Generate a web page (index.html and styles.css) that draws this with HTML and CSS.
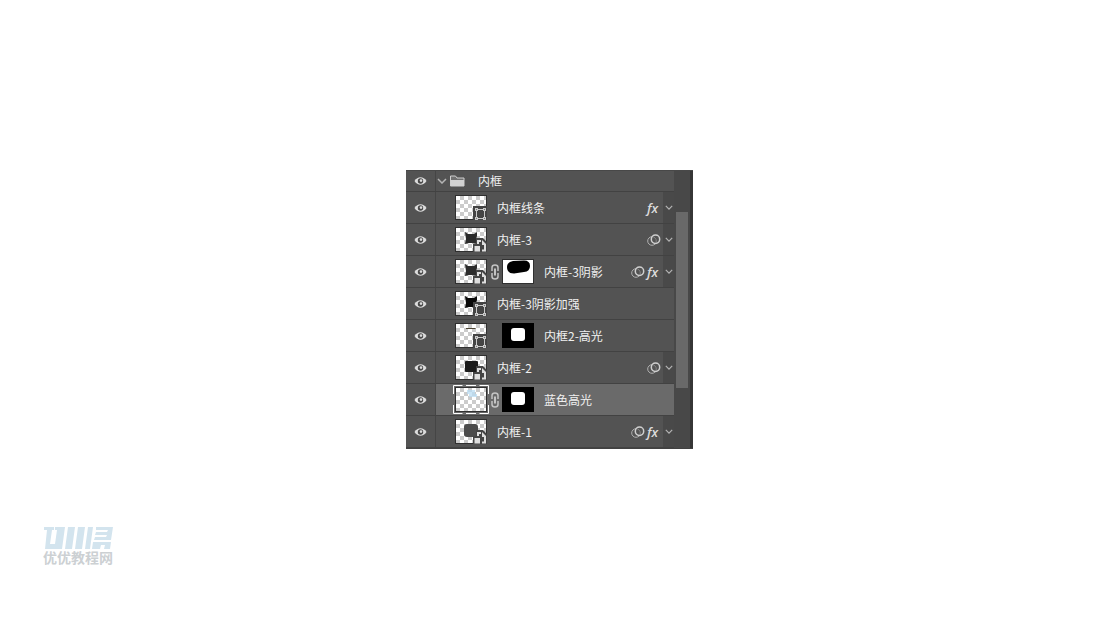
FILE: index.html
```html
<!DOCTYPE html>
<html lang="zh-CN">
<head>
<meta charset="utf-8">
<title>内框</title>
<link rel="stylesheet" href="styles.css">
</head>
<body>
<svg class="defs" aria-hidden="true">
  <defs>
    <pattern id="checks" x="1" y="1" width="8" height="8" patternUnits="userSpaceOnUse">
      <rect width="8" height="8" fill="#fff"/>
      <path d="M4 0h4v4H4zM0 4h4v4H0z" fill="#cbcbcb"/>
    </pattern>
    <symbol id="eye" viewBox="0 0 14 10">
      <path d="M.5 5C3.500 0 9.500 0 12.500 5 9.500 10 3.500 10 .5 5z" fill="#dcdcdc"/>
      <circle cx="6.500" cy="5" r="2.700" fill="#484848"/>
      <circle cx="7" cy="4.600" r="1.300" fill="#dcdcdc"/>
    </symbol>
    <symbol id="chevron" viewBox="0 0 10 6">
      <path d="M1 1l4 4 4-4" fill="none" stroke="#b4b4b4" stroke-width="1.500"/>
    </symbol>
    <symbol id="rings" viewBox="0 0 14 12">
      <circle cx="5" cy="7" r="4.300" fill="none" stroke="#b0b0b0"/>
      <circle cx="8.500" cy="5.200" r="4.200" fill="#535353" fill-opacity=".5" stroke="#d0d0d0" stroke-width="1.500"/>
    </symbol>
    <symbol id="link" viewBox="0 0 8 16">
      <path d="M1 7V3.500Q1 1 4 1t3 2.500V7M1 9v3.500Q1 15 4 15t3-2.500V9" fill="none" stroke="#c4c4c4" stroke-width="1.500"/>
      <path d="M4 4.500v7" stroke="#d0d0d0" stroke-width="1.800"/>
    </symbol>
    <symbol id="base" viewBox="0 0 32 25">
      <rect width="32" height="25" fill="#303030"/>
      <rect x="1" y="1" width="30" height="23" fill="url(#checks)"/>
    </symbol>
    <symbol id="shape" viewBox="0 0 32 25">
      <path d="M18 11h14v14H18z" fill="#444"/>
      <path d="M21.500 14.500h8v9h-8z" fill="none" stroke="#c9c9c9"/>
      <path d="M20 13h3v3h-3zM28 13h3v3h-3zM20 22h3v3h-3zM28 22h3v3h-3z" fill="#c9c9c9"/>
      <path d="M21 14h1v1h-1zM29 14h1v1h-1zM21 23h1v1h-1zM29 23h1v1h-1z" fill="#777"/>
    </symbol>
    <symbol id="smart" viewBox="0 0 32 25">
      <path d="M21 11h7l4 4v10H18v-8h3z" fill="#444"/>
      <path d="M22 17v-4h4v2h-2v2zM27 13l4 4v7.500h-4v-2h2V18h-2z" fill="#dedede"/>
      <path d="M19.500 19h5.500v5.500h-5.500z" fill="#dedede"/>
    </symbol>
    <symbol id="star" viewBox="0 0 32 25">
      <path d="M10 5l3 2h6l3-2v4l-1 3 1 5-5-1h-3l-4 1 1-5z"/>
    </symbol>
    <symbol id="mask" viewBox="0 0 32 25">
      <rect width="32" height="25" fill="#000"/>
      <rect x="9" y="5" width="14" height="13" rx="3" fill="#fff"/>
    </symbol>
  </defs>
</svg>

<main class="stage">
  <section class="panel" aria-label="图层">
    <ul class="layers">
      <li class="layer group">
        <button class="eye" aria-label="显示"><svg><use href="#eye"/></svg></button>
        <div class="body">
          <button class="toggle" aria-label="展开"><svg><use href="#chevron"/></svg></button>
          <svg class="folder" viewBox="0 0 15 12"><path d="M.5 11V1h5l1.500 2h7v8z" fill="#707070" stroke="#cfcfcf"/><path d="M1 5h13v6H1z" fill="#d2d2d2"/></svg>
          <span class="name">内框</span>
        </div>
      </li>
      <li class="layer">
        <button class="eye" aria-label="显示"><svg><use href="#eye"/></svg></button>
        <div class="body">
          <svg class="thumb"><use href="#base"/><use href="#shape"/></svg>
          <span class="name">内框线条</span>
          <span class="fx">fx</span>
          <button class="more" aria-label="效果"><svg><use href="#chevron"/></svg></button>
        </div>
      </li>
      <li class="layer">
        <button class="eye" aria-label="显示"><svg><use href="#eye"/></svg></button>
        <div class="body">
          <svg class="thumb"><use href="#base"/><use href="#star" fill="#2b2b2b"/><use href="#smart"/></svg>
          <span class="name">内框-3</span>
          <svg class="rings"><use href="#rings"/></svg>
          <button class="more" aria-label="效果"><svg><use href="#chevron"/></svg></button>
        </div>
      </li>
      <li class="layer">
        <button class="eye" aria-label="显示"><svg><use href="#eye"/></svg></button>
        <div class="body">
          <svg class="thumb"><use href="#base"/><use href="#star" fill="#2b2b2b"/><use href="#smart"/></svg>
          <span class="join"><svg class="link"><use href="#link"/></svg></span>
          <svg class="thumb" viewBox="0 0 32 25"><rect width="32" height="25" fill="#303030"/><path d="M1 1h30v23H1z" fill="#fff"/><path d="M5 8q0-5 6-6l11-.5q6 0 6 5.500t-6 6l-10 1.500q-7 0-7-6.500z" fill="#000"/></svg>
          <span class="name">内框-3阴影</span>
          <svg class="rings"><use href="#rings"/></svg>
          <span class="fx">fx</span>
          <button class="more" aria-label="效果"><svg><use href="#chevron"/></svg></button>
        </div>
      </li>
      <li class="layer">
        <button class="eye" aria-label="显示"><svg><use href="#eye"/></svg></button>
        <div class="body">
          <svg class="thumb"><use href="#base"/><use href="#star" fill="#080808"/><use href="#shape"/></svg>
          <span class="name">内框-3阴影加强</span>
        </div>
      </li>
      <li class="layer">
        <button class="eye" aria-label="显示"><svg><use href="#eye"/></svg></button>
        <div class="body">
          <svg class="thumb"><use href="#base"/><path d="M11 5h9l1 1H11z" fill="#4d4533"/><use href="#shape"/></svg>
          <span class="join"></span>
          <svg class="thumb"><use href="#mask"/></svg>
          <span class="name">内框2-高光</span>
        </div>
      </li>
      <li class="layer">
        <button class="eye" aria-label="显示"><svg><use href="#eye"/></svg></button>
        <div class="body">
          <svg class="thumb"><use href="#base"/><rect x="10" y="6" width="13" height="11" rx="1" fill="#1c1c1c"/><use href="#smart"/></svg>
          <span class="name">内框-2</span>
          <svg class="rings"><use href="#rings"/></svg>
          <button class="more" aria-label="效果"><svg><use href="#chevron"/></svg></button>
        </div>
      </li>
      <li class="layer selected">
        <button class="eye" aria-label="显示"><svg><use href="#eye"/></svg></button>
        <div class="body">
          <svg class="thumb"><use href="#base"/><path d="M12 3h8v4h2v3h-8V7h-2z" fill="#b9dcf3" opacity=".75"/><path d="M-1.500 7v-8.500h9M24.500-1.500h9V7M33.500 18v8.500h-9M7.500 26.500h-9V18M11-1.500h10M11 26.500h10" fill="none" stroke="#fff"/></svg>
          <span class="join"><svg class="link"><use href="#link"/></svg></span>
          <svg class="thumb"><use href="#mask"/></svg>
          <span class="name">蓝色高光</span>
        </div>
      </li>
      <li class="layer">
        <button class="eye" aria-label="显示"><svg><use href="#eye"/></svg></button>
        <div class="body">
          <svg class="thumb"><use href="#base"/><rect x="9" y="5" width="14" height="13" rx="3" fill="#4b4b4b"/><use href="#smart"/></svg>
          <span class="name">内框-1</span>
          <svg class="rings"><use href="#rings"/></svg>
          <span class="fx">fx</span>
          <button class="more" aria-label="效果"><svg><use href="#chevron"/></svg></button>
        </div>
      </li>
    </ul>
    <div class="scrollbar"><div class="handle"></div></div>
  </section>
</main>

<footer class="brand">
  <svg class="logo" viewBox="0 0 70 24" aria-hidden="true">
    <g fill="#d3e4ee">
      <path d="M1 1h10v3H9L7 18h5l2-14h-2V1h10l-3 22H2L4 4H1z"/>
      <path d="M25 1h7l-3 22h-7zM35 1h7l-3 22h-7zM45 1h5l-3 22h-5z"/>
      <path d="M53 1h17l-2 13H51l1-3h11l1-2H52l1-3h11l1-2H53z"/>
      <path d="M50 16h18l-1 7h-6l1-4h-4l-1 4h-8z"/>
    </g>
  </svg>
  <span class="brand-name">优优教程网</span>
</footer>
</body>
</html>
```
FILE: styles.css
```css
* {
  box-sizing: border-box;
}

body {
  margin: 0;
  background: #fff;
  font-family: "Noto Sans CJK SC", sans-serif;
  font-size: 12px;
}

svg {
  display: block;
  flex: none;
}

button {
  display: flex;
  align-items: center;
  justify-content: center;
  flex: none;
  margin: 0;
  padding: 0;
  border: 0;
  background: none;
}

.defs {
  position: absolute;
  width: 0;
  height: 0;
}

.stage {
  display: flex;
  align-items: center;
  justify-content: center;
  min-height: 100vh;
  padding-right: 1px;
}

.panel {
  display: flex;
  width: 287px;
  border-top: 1px solid #484848;
  border-bottom: 1px solid #414141;
  background: #484848;
}

.layers {
  flex: 1;
  margin: 0;
  padding: 0;
  list-style: none;
}

.layer {
  display: flex;
  height: 32px;
  border-bottom: 1px solid #424242;
  background: #535353;
}

.group {
  height: 21px;
}

.eye {
  width: 30px;
  border-right: 1px solid #454545;
}

.eye svg {
  width: 14px;
  height: 10px;
}

.body {
  display: flex;
  flex: 1;
  align-items: center;
  padding-left: 19px;
}

.group .body {
  padding-left: 1px;
}

.more svg {
  width: 8px;
  height: 5px;
}

.toggle svg {
  width: 10px;
  height: 6px;
}

.folder {
  width: 15px;
  height: 12px;
  margin-left: 3px;
}

.thumb {
  width: 32px;
  height: 25px;
  overflow: visible;
}

.join {
  display: flex;
  justify-content: center;
  width: 15px;
}

.link {
  width: 8px;
  height: 16px;
}

.name {
  flex: 1;
  padding-left: 10px;
  color: #f0f0f0;
  line-height: 18px;
  white-space: nowrap;
}

.group .name {
  padding-left: 13px;
}

.selected .body {
  background: #6a6a6a;
}

.rings {
  width: 14px;
  height: 12px;
  margin-right: 2px;
}

.fx {
  width: 13px;
  margin-right: 3px;
  color: #dcdcdc;
  font: italic 600 13px/18px "Open Sans", sans-serif;
}

.more {
  align-self: stretch;
  width: 11px;
  background: #494949;
}

.scrollbar {
  width: 19px;
  padding: 41px 2px 0;
  border-right: 3px solid #363636;
}

.handle {
  width: 12px;
  height: 176px;
  background: #696969;
}

.brand {
  position: absolute;
  bottom: 54px;
  left: 43px;
}

.logo {
  width: 70px;
  height: 24px;
}

.brand-name {
  display: block;
  color: #ccd0d3;
  font-size: 14px;
  font-weight: bold;
  line-height: 15px;
}
```
